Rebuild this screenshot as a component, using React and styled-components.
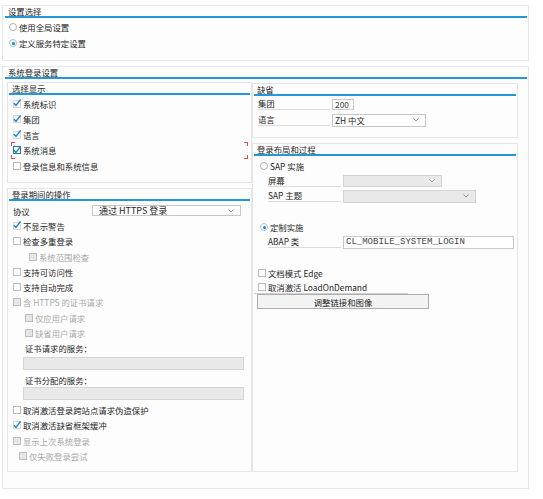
import React from "react";
import styled, { createGlobalStyle } from "styled-components";

const GlobalStyle = createGlobalStyle`
  body {
    margin: 0;
    background: #fff;
    font-family: "Noto Sans CJK SC", "Noto Sans", sans-serif;
    font-size: 8.4px;
    color: #262626;
  }
`;

const Page = styled.div`
  width: 527px;
  padding: 5px 0 0 2px;
`;

const Frame = styled.div`
  box-sizing: border-box;
  height: ${(p) => p.$h}px;
  margin-bottom: ${(p) => p.$mb || 0}px;
  border: 1px solid #e7e7e7;
  background: #fdfdfd;
  padding: 0 1px 0 2px;
  display: flex;
  flex-direction: column;
`;

const Title = styled.div`
  flex: none;
  height: 10px;
  line-height: 10px;
  padding-left: 3px;
  border-bottom: 2px solid #2397d8;
  white-space: nowrap;
`;

const Body = styled.div`
  flex: none;
  height: 390px;
  padding: 3px 0 0 2px;
  display: flex;
`;

const Column = styled.div`
  box-sizing: border-box;
  width: ${(p) => p.$w}px;
  margin-top: ${(p) => p.$mt || 0}px;
  display: flex;
  flex-direction: column;
  gap: 5px;
`;

const Box = styled.div`
  box-sizing: border-box;
  height: ${(p) => (p.$h ? `${p.$h}px` : "auto")};
  flex: ${(p) => (p.$h ? "none" : "1")};
  border: 1px solid #e5e5e5;
  background: #fdfdfd;
  padding: 0 1px;
  display: flex;
  flex-direction: column;
`;

const List = styled.div`
  padding-top: ${(p) => p.$pt || 0}px;
  display: flex;
  flex-direction: column;
`;

const Row = styled.div`
  box-sizing: border-box;
  display: flex;
  align-items: center;
  gap: 2px;
  height: ${(p) => p.$h || 15.3}px;
  padding-left: ${(p) => p.$indent ?? 4}px;
  color: ${(p) => (p.$disabled ? "#a8a8a8" : "inherit")};
  white-space: nowrap;
  ${(p) =>
    p.$underline &&
    `width: ${p.$underline}px; border-bottom: 1px solid #cfcfcf;`}
`;

const red = "linear-gradient(#e8474c, #e8474c)";
const FocusRow = styled(Row)`
  height: 17.5px;
  margin: -1px 2px;
  padding-left: 2px;
  background: ${red} left top / 1px 4px no-repeat,
    ${red} left top / 4px 1px no-repeat,
    ${red} right top / 1px 4px no-repeat,
    ${red} right top / 4px 1px no-repeat,
    ${red} left bottom / 1px 4px no-repeat,
    ${red} left bottom / 4px 1px no-repeat,
    ${red} right bottom / 1px 4px no-repeat,
    ${red} right bottom / 4px 1px no-repeat;
`;

const Spacer = styled.div`
  flex: none;
  height: ${(p) => p.$h}px;
`;

const Label = styled.div`
  box-sizing: border-box;
  width: ${(p) => p.$w}px;
  height: 12px;
  line-height: 11px;
  border-bottom: 1px solid #dcdcdc;
  flex: none;
`;

const FieldLabel = styled.div`
  width: ${(p) => p.$w}px;
  flex: none;
`;

const CheckBox = styled.span`
  box-sizing: border-box;
  flex: none;
  width: 8px;
  height: 8px;
  border: 1px solid
    ${(p) => (p.$focus ? "#2a6fae" : p.$checked ? "#dadada" : "#bdbdbd")};
  background: ${(p) => (p.$disabled ? "#e6e6e6" : "#fff")};
  display: inline-flex;
  align-items: center;
  justify-content: center;
  overflow: visible;
`;

const RadioDot = styled.span`
  box-sizing: border-box;
  flex: none;
  width: 8px;
  height: 8px;
  border-radius: 50%;
  border: 1px solid ${(p) => (p.$on ? "#9cc4e4" : "#b0b0b0")};
  background: #fff;
  display: inline-flex;
  align-items: center;
  justify-content: center;
  &::after {
    content: "";
    display: ${(p) => (p.$on ? "block" : "none")};
    width: 3px;
    height: 3px;
    border-radius: 50%;
    background: #1c7fd0;
  }
`;

const SelectBox = styled.div`
  box-sizing: border-box;
  flex: none;
  width: ${(p) => p.$w}px;
  height: ${(p) => p.$h}px;
  border: 1px solid ${(p) => (p.$disabled ? "#d3d3d3" : "#c7c7c7")};
  background: ${(p) => (p.$disabled ? "#e9e9e9" : "#fff")};
  padding: 0 6px 0 ${(p) => p.$pad || 2}px;
  display: flex;
  align-items: center;
  justify-content: space-between;
  font-size: ${(p) => p.$fs || "inherit"};
`;

const TextInput = styled.div`
  box-sizing: border-box;
  flex: none;
  width: ${(p) => p.$w}px;
  height: ${(p) => p.$h}px;
  margin: ${(p) => p.$m || 0};
  border: 1px solid ${(p) => (p.$disabled ? "#d6d6d6" : "#c9c9c9")};
  background: ${(p) => (p.$disabled ? "#e9e9e9" : "#fff")};
  padding-left: 2px;
  display: flex;
  align-items: center;
  font-family: ${(p) => (p.$mono ? '"Liberation Mono", monospace' : "inherit")};
  font-size: ${(p) => (p.$mono ? "9px" : "inherit")};
  color: #444;
`;

const Button = styled.div`
  box-sizing: border-box;
  width: 172px;
  height: 15px;
  margin-left: 3px;
  border: 1px solid #adadad;
  background: #f3f3f3;
  display: flex;
  align-items: center;
  justify-content: center;
`;

const Chevron = () => (
  <svg width="6" height="4" viewBox="0 0 6 4">
    <polyline points="0.5,0.5 3,3 5.5,0.5" fill="none" stroke="#8a8a8a" strokeWidth="0.9" />
  </svg>
);

const Tick = () => (
  <svg width="8" height="8" viewBox="0 0 8 8" style={{ overflow: "visible", marginTop: -1 }}>
    <path d="M0.8 4.2 L3 6.4 L7.6 0.4" fill="none" stroke="#1b87d3" strokeWidth="1.5" />
  </svg>
);

const Check = ({ label, checked, disabled, indent, h, underline }) => (
  <Row $indent={indent} $disabled={disabled} $h={h} $underline={underline}>
    <CheckBox $checked={checked} $disabled={disabled}>
      {checked && <Tick />}
    </CheckBox>
    {label}
  </Row>
);

const Radio = ({ label, on, indent, h }) => (
  <Row $indent={indent} $h={h}>
    <RadioDot $on={on} />
    {label}
  </Row>
);

export default function App() {
  return (
    <>
      <GlobalStyle />
      <Page>
        <Frame $h={56} $mb={5}>
          <Title>设置选择</Title>
          <List $pt={1}>
            <Radio label="使用全局设置" h={16} />
            <Radio label="定义服务特定设置" on h={16} />
          </List>
        </Frame>

        <Frame $h={423}>
          <Title>系统登录设置</Title>
          <Body>
            <Column $w={245}>
              <Box $h={101}>
                <Title>选择显示</Title>
                <List $pt={1}>
                  <Check label="系统标识" checked h={15.5} />
                  <Check label="集团" checked h={15.5} />
                  <Check label="语言" checked h={15.5} />
                  <FocusRow>
                    <CheckBox $checked $focus>
                      <Tick />
                    </CheckBox>
                    系统消息
                  </FocusRow>
                  <Check label="登录信息和系统信息" h={15.5} />
                </List>
              </Box>

              <Box>
                <Title>登录期间的操作</Title>
                <List $pt={2}>
                  <Row>
                    <FieldLabel $w={77}>协议</FieldLabel>
                    <SelectBox $w={149} $h={11} $pad={6} $fs="9px">
                      通过 HTTPS 登录
                      <Chevron />
                    </SelectBox>
                  </Row>
                  <Check label="不显示警告" checked />
                  <Check label="检查多重登录" />
                  <Check label="系统范围检查" disabled indent={20} />
                  <Check label="支持可访问性" />
                  <Check label="支持自动完成" />
                  <Check label="含 HTTPS 的证书请求" disabled />
                  <Check label="仅应用户请求" disabled indent={16} />
                  <Check label="缺省用户请求" disabled indent={16} />
                  <Row $indent={16}>证书请求的服务：</Row>
                  <TextInput $w={221} $h={13} $m="1px 0 2px 14px" $disabled />
                  <Row $indent={16}>证书分配的服务：</Row>
                  <TextInput $w={221} $h={13} $m="0 0 2px 14px" $disabled />
                  <Check label="取消激活登录跨站点请求伪造保护" />
                  <Check label="取消激活缺省框架缓冲" checked />
                  <Check label="显示上次系统登录" disabled />
                  <Check label="仅失败登录尝试" disabled indent={10} />
                </List>
              </Box>
            </Column>

            <Column $w={266} $mt={1}>
              <Box $h={55}>
                <Title>缺省</Title>
                <List>
                  <Row $h={16}>
                    <Label $w={72}>集团</Label>
                    <TextInput $w={22} $h={11}>200</TextInput>
                  </Row>
                  <Row $h={16}>
                    <Label $w={72}>语言</Label>
                    <SelectBox $w={94} $h={13}>
                      ZH 中文
                      <Chevron />
                    </SelectBox>
                  </Row>
                </List>
              </Box>

              <Box>
                <Title>登录布局和过程</Title>
                <List $pt={2}>
                  <Radio label="SAP 实施" indent={6} h={15} />
                  <Row $h={15} $indent={14}>
                    <Label $w={73}>屏幕</Label>
                    <SelectBox $w={99} $h={12} $disabled>
                      <span />
                      <Chevron />
                    </SelectBox>
                  </Row>
                  <Row $h={16} $indent={14}>
                    <Label $w={73}>SAP 主题</Label>
                    <SelectBox $w={133} $h={13} $disabled>
                      <span />
                      <Chevron />
                    </SelectBox>
                  </Row>
                  <Spacer $h={15} />
                  <Radio label="定制实施" on indent={6} h={16} />
                  <Row $h={14} $indent={14}>
                    <Label $w={73}>ABAP 类</Label>
                    <TextInput $w={171} $h={13} $mono>
                      CL_MOBILE_SYSTEM_LOGIN
                    </TextInput>
                  </Row>
                  <Spacer $h={17} />
                  <Check label="文档模式 Edge" h={14} />
                  <Check label="取消激活 LoadOnDemand" h={14} underline={154} />
                  <Button>调整链接和图像</Button>
                </List>
              </Box>
            </Column>
          </Body>
        </Frame>
      </Page>
    </>
  );
}
